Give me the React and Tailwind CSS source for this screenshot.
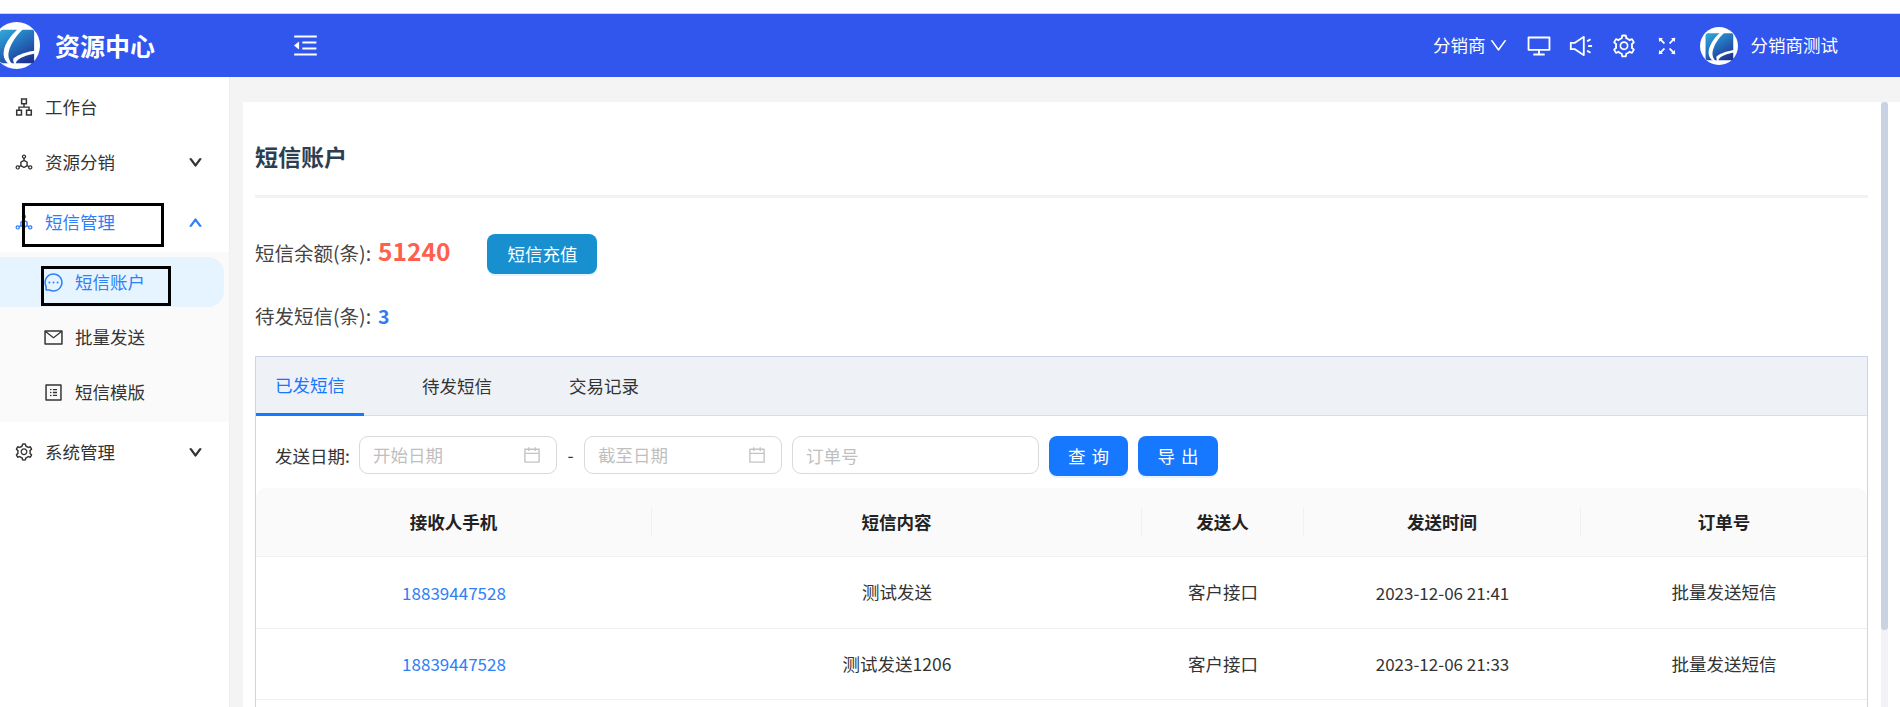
import {
  AiOutlineApartment,
  AiOutlineCalendar,
  AiOutlineDeploymentUnit,
  AiOutlineDesktop,
  AiOutlineDown,
  AiOutlineFullscreen,
  AiOutlineMail,
  AiOutlineMenuFold,
  AiOutlineMessage,
  AiOutlineProfile,
  AiOutlineSetting,
  AiOutlineSound,
  AiOutlineUp,
} from 'react-icons/ai';

const FONT = { fontFamily: '"Noto Sans CJK SC", "Noto Sans", sans-serif' };

const rows = [
  { phone: '18839447528', content: '测试发送', sender: '客户接口', time: '2023-12-06 21:41', order: '批量发送短信' },
  { phone: '18839447528', content: '测试发送1206', sender: '客户接口', time: '2023-12-06 21:33', order: '批量发送短信' },
];

const heads = ['接收人手机', '短信内容', '发送人', '发送时间', '订单号'];

// logo: white disc, blue square, white swoosh
const Logo = ({ className }) => (
  <svg viewBox="0 0 48 48" className={className}>
    <defs>
      <linearGradient id="logoFill" x1="0.1" y1="0" x2="0.7" y2="1">
        <stop offset="0" stopColor="#2fa6d8" />
        <stop offset="0.55" stopColor="#2369b8" />
        <stop offset="1" stopColor="#1f3595" />
      </linearGradient>
    </defs>
    <circle cx="24" cy="24" r="24" fill="#fff" />
    <path d="M10 8h30a2 2 0 0 1 2 2v30a2 2 0 0 1-2 2H10a3 3 0 0 1-3-3V11a3 3 0 0 1 3-3z" fill="url(#logoFill)" />
    <path d="M29 4C20 11 12 21 11 30c-1 6 2 11 7 14h3c-4-3-6-8-5-13C18 21 25 12 33 5z" fill="#fff" />
    <path d="M44 29C35 30 26 33 21 37c-1 2 0 5 2 7C23 41 25 38 30 36c5-2 10-3 14-4z" fill="#fff" />
  </svg>
);

const MenuItem = ({ icon: Icon, label, arrow, active }) => (
  <div className={`h-[50px] flex items-center pl-[14px] pr-[26px] ${active ? 'text-[#2f80f7]' : 'text-[#333]'}`}>
    <Icon size={20} />
    <span className="ml-[11px] flex-1 text-[17.5px]">{label}</span>
    {arrow === 'down' && <AiOutlineDown size={15} stroke="currentColor" strokeWidth={70} />}
    {arrow === 'up' && <AiOutlineUp size={15} stroke="currentColor" strokeWidth={70} />}
  </div>
);

const SubItem = ({ icon: Icon, label, active }) => (
  <div
    className={`relative h-[50px] w-[224px] flex items-center pl-[43px] rounded-r-[16px] ${
      active ? 'bg-[#e6f4ff] text-[#2f80f7]' : 'text-[#333]'
    }`}
  >
    <Icon size={21} />
    <span className="ml-[11px] text-[17.5px]">{label}</span>
    {active && <div className="absolute left-[41px] top-[9px] w-[130px] h-[40px] border-[3px] border-black" />}
  </div>
);

const DateInput = ({ placeholder }) => (
  <div className="w-[198px] h-[38px] flex items-center pl-[13px] pr-[14px] border border-[#d9d9d9] rounded-[9px]">
    <input
      placeholder={placeholder}
      className="min-w-0 flex-1 outline-none text-[17.5px] placeholder:text-[#bfbfbf]"
    />
    <AiOutlineCalendar size={20} className="text-[#c4c4c4]" />
  </div>
);

const Sidebar = () => (
  <aside className="w-[230px] shrink-0 border-r border-[#f0f0f0] bg-white pt-[5px]">
    <MenuItem icon={AiOutlineApartment} label="工作台" />
    <div className="mt-[5px]">
      <MenuItem icon={AiOutlineDeploymentUnit} label="资源分销" arrow="down" />
    </div>
    <div className="relative mt-[10px]">
      <MenuItem icon={AiOutlineDeploymentUnit} label="短信管理" arrow="up" active />
      <div className="absolute left-[22px] top-[6px] w-[142px] h-[44px] border-[3px] border-black" />
    </div>
    <div className="mt-[5px] bg-[#fafafa] py-[5px] flex flex-col gap-[5px]">
      <SubItem icon={AiOutlineMessage} label="短信账户" active />
      <SubItem icon={AiOutlineMail} label="批量发送" />
      <SubItem icon={AiOutlineProfile} label="短信模版" />
    </div>
    <div className="mt-[5px]">
      <MenuItem icon={AiOutlineSetting} label="系统管理" arrow="down" />
    </div>
  </aside>
);

const SmsTable = () => (
  <div>
    <div className="grid grid-cols-[396px_490px_162px_277px_1fr] h-[69px] bg-[#fafafa] rounded-t-[10px] border-b border-[#f0f0f0]">
      {heads.map((head, i) => (
        <div key={head} className="flex items-center">
          <span className="flex-1 text-center text-[17.5px] font-bold text-[#222]">{head}</span>
          {i < 4 && <span className="w-px h-[28px] bg-[#f0f0f0]" />}
        </div>
      ))}
    </div>
    {rows.map((row) => (
      <div
        key={row.content}
        className="grid grid-cols-[396px_490px_162px_277px_1fr] h-[71.6px] items-center text-center text-[17.5px] text-[#333] border-b border-[#f0f0f0]"
      >
        <span className="text-[17px] text-[#2f80f7]">{row.phone}</span>
        <span>{row.content}</span>
        <span>{row.sender}</span>
        <span className="text-[17px]">{row.time}</span>
        <span>{row.order}</span>
      </div>
    ))}
  </div>
);

export default function App() {
  return (
    <div className="h-[707px] overflow-hidden flex flex-col bg-white" style={FONT}>
      <div className="h-[14px] shrink-0 border-b border-[#d4d4d4]" />

      <header className="h-[63px] shrink-0 flex items-center bg-[#3056ee] text-white">
        <Logo className="w-[47px] h-[47px] -ml-[7px] shrink-0" />
        <span className="ml-[15px] text-[25px] font-bold">资源中心</span>
        <AiOutlineMenuFold size={29} className="ml-[136px]" />
        <div className="ml-auto flex items-center pr-[62px]">
          <span className="text-[17.5px]">分销商</span>
          <AiOutlineDown size={21} className="ml-[2px]" />
          <AiOutlineDesktop size={26} className="ml-[17px]" />
          <AiOutlineSound size={26} className="ml-[16px]" />
          <AiOutlineSetting size={26} className="ml-[17px]" />
          <AiOutlineFullscreen size={24} className="ml-[18px]" />
          <Logo className="w-[38px] h-[38px] ml-[21px]" />
          <span className="ml-[13px] text-[17.5px]">分销商测试</span>
        </div>
      </header>

      <div className="flex flex-1 min-h-0">
        <Sidebar />
        <main className="flex-1 min-w-0 bg-[#f4f4f4] pl-[13px] pt-[25px] flex">
          <div className="flex-1 min-w-0 bg-white pl-[12px] flex">
            <div className="w-[1613px] shrink-0 flex flex-col">
              <div className="h-[96px] pt-[15px] flex items-center border-b-[3px] border-[#f2f2f2] text-[23px] font-bold text-[#2c3e50]">
                短信账户
              </div>

              <div className="mt-[36px] h-[40px] flex items-center text-[19.5px] text-[#444]">
                <span className="-mt-[2px]">短信余额(条):</span>
                <span className="ml-[7px] -mt-[5px] text-[24.5px] font-bold text-[#ff5f4d]">51240</span>
                <button className="ml-[37px] w-[110px] h-[40px] rounded-[8px] bg-[#1890d0] text-[17.5px] text-white shadow-[0_2px_0_rgba(5,145,255,0.1)]">
                  短信充值
                </button>
              </div>

              <div className="mt-[30px] h-[24px] flex items-center text-[19.5px] text-[#444]">
                <span>待发短信(条):</span>
                <span className="ml-[7px] font-bold text-[#2f7bf0]">3</span>
              </div>

              <section className="mt-[28px] flex-1 border-x border-t border-[#ccd5e5]">
                <div className="h-[59px] flex gap-[39px] bg-[#eef1f6] border-b border-[#d8dde6] text-[17.5px]">
                  <div className="w-[108px] h-[59px] flex items-center justify-center border-b-[3px] border-[#1677ff] text-[#1677ff]">
                    已发短信
                  </div>
                  <div className="w-[108px] flex items-center justify-center text-[#333]">待发短信</div>
                  <div className="w-[108px] flex items-center justify-center text-[#333]">交易记录</div>
                </div>

                <div className="mt-[20px] pl-[19px] h-[40px] flex items-start text-[17.5px]">
                  <span className="w-[74px] h-[40px] flex items-center whitespace-nowrap text-[#333]">发送日期:</span>
                  <div className="ml-[10px]">
                    <DateInput placeholder="开始日期" />
                  </div>
                  <span className="w-[27px] h-[38px] flex items-center justify-center text-[#333]">-</span>
                  <DateInput placeholder="截至日期" />
                  <input
                    placeholder="订单号"
                    className="ml-[10px] w-[247px] h-[38px] px-[13px] border border-[#d9d9d9] rounded-[9px] outline-none placeholder:text-[#bfbfbf]"
                  />
                  <button className="ml-[10px] w-[79px] h-[40px] rounded-[8px] bg-[#1677ff] text-white tracking-[6px] pl-[6px] shadow-[0_2px_0_rgba(5,145,255,0.1)]">
                    查询
                  </button>
                  <button className="ml-[10px] w-[80px] h-[40px] rounded-[8px] bg-[#1677ff] text-white tracking-[6px] pl-[6px] shadow-[0_2px_0_rgba(5,145,255,0.1)]">
                    导出
                  </button>
                </div>

                <div className="mt-[12px]">
                  <SmsTable />
                </div>
              </section>
            </div>

            <div className="ml-[13px] w-[7px] shrink-0 bg-[#f1f3f7]">
              <div className="h-[528px] rounded-full bg-[#c8d2e2]" />
            </div>
          </div>
        </main>
      </div>
    </div>
  );
}
